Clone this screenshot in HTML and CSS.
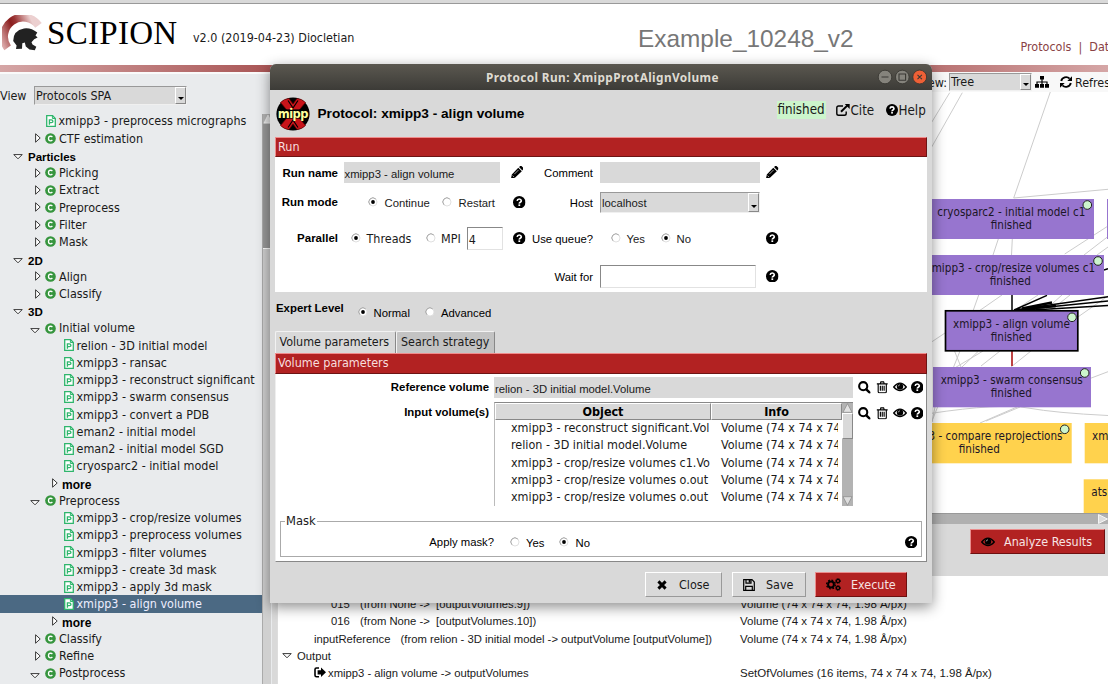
FILE: index.html
```html
<!DOCTYPE html>
<html lang="en">
<head>
<meta charset="utf-8">
<title>Scipion</title>
<link rel="stylesheet" href="styles.css">
</head>
<body>
<svg width="0" height="0" class="defs">
  <defs>
    <linearGradient id="crest" x1="0" y1="1" x2="1" y2="0.6">
      <stop offset="0" stop-color="#dba9a9"/><stop offset=".45" stop-color="#8a1d1d"/><stop offset=".6" stop-color="#9a3535"/><stop offset="1" stop-color="#ecd0d0"/>
    </linearGradient>
    <symbol id="help" viewBox="0 0 12 12"><circle cx="6" cy="6" r="6"/><path d="M4 4.6Q4.2 2.9 6 2.9T8 4.6Q8 5.4 7 6T6.1 7.3" fill="none" stroke="#fff" stroke-width="1.6"/><rect x="5.2" y="8" width="1.7" height="1.6" fill="#fff"/></symbol>
    <symbol id="pencil" viewBox="0 0 12 12"><path d="M0 12L.8 8.2 7 1.6 10.4 5 3.8 11.2ZM7.7 1L8.9 0Q9.7-.4 10.3.2L11.8 1.7Q12.3 2.2 11.8 3L10.9 4.2Z"/><path d="M1.5 9.2L2.8 10.5M3.2 7.8L7.2 3.8" stroke="#fff" stroke-width=".6"/></symbol>
    <symbol id="lens" viewBox="0 0 12 12"><circle cx="5" cy="5" r="3.9" fill="none" stroke="#000" stroke-width="2"/><path d="M8 8L11.2 11.2" stroke="#000" stroke-width="2.3" stroke-linecap="round"/></symbol>
    <symbol id="trash" viewBox="0 0 11 12"><path d="M.3 2.7H10.7M3.6 2.5L4.2.8H6.8L7.4 2.5M1.6 3V10.2Q1.6 11.3 2.7 11.3H8.3Q9.4 11.3 9.4 10.2V3M3.7 4.6V9.4M5.5 4.6V9.4M7.3 4.6V9.4" fill="none" stroke="#000" stroke-width="1.1"/></symbol>
    <symbol id="eye" viewBox="0 0 14 10"><path d="M.7 5Q7-2.6 13.3 5Q7 12.2.7 5Z" fill="none" stroke="#000" stroke-width="1.3"/><circle cx="7" cy="4.6" r="3.2"/><path d="M5.3 4.4Q5.4 2.9 6.9 2.8" stroke="#ddd" stroke-width=".7" fill="none"/></symbol>
    <symbol id="proto" viewBox="0 0 10 12"><path d="M.7.7H6.6L9.3 3.4V11.3H.7Z" fill="#fff" stroke="#2fb56c" stroke-width="1.3"/><path d="M6.4.7V3.5H9.3" fill="none" stroke="#2fb56c"/><path d="M3.4 9.8V4.9H5.2Q6.9 4.9 6.9 6.3T5.2 7.7H3.4" fill="none" stroke="#2fb56c" stroke-width="1.3"/></symbol>
    <symbol id="cat" viewBox="0 0 12 12"><circle cx="6" cy="6" r="5.8" fill="#36953e"/><path d="M8 4.5Q7.4 3.5 6.1 3.5Q3.8 3.6 3.8 6T6.1 8.5Q7.4 8.5 8 7.5" fill="none" stroke="#fff" stroke-width="1.4"/></symbol>
    <symbol id="closed" viewBox="0 0 6 10"><path d="M.6.8L5.2 5 .6 9.2Z" fill="#fff" stroke="#222" stroke-width=".9"/></symbol>
    <symbol id="open" viewBox="0 0 10 6"><path d="M.8.6H9.2L5 4.8Z" fill="#fff" stroke="#222" stroke-width=".9"/></symbol>
    <symbol id="radio" viewBox="0 0 10 10"><circle cx="5" cy="5" r="4" fill="#fff" stroke="#ddd" stroke-width=".9"/><path d="M2 7.8A4 4 0 0 1 7.8 2" fill="none" stroke="#999" stroke-width=".8"/></symbol>
    <symbol id="radio-on" viewBox="0 0 10 10"><use href="#radio"/><circle cx="5" cy="5" r="1.9"/></symbol>
  </defs>
</svg>

<div class="app">
  <div class="menubar"></div>
  <header class="header">
    <svg class="logo" width="40" height="40" viewBox="0 0 40 40">
      <path d="M5.6 32.8A17.6 17.6 0 0 1 36.5 10.4" fill="none" stroke="url(#crest)" stroke-width="8"/>
      <path d="M11.2 26Q11 15.5 22 13.4Q29 12.4 35.3 17.6L33.5 20.4 35.6 22.6 32.2 24.2 29.5 27.2 30.5 29.6 34.3 31.7 32.8 35.2 27.5 34.6 23.8 31.4 22.8 27.4 20.3 28.2 20 33.7 14 34 14.6 30.4Z" fill="#222"/>
    </svg>
    <span class="brand">SCIPION</span>
    <span class="version">v2.0 (2019-04-23) Diocletian</span>
    <span class="project">Example_10248_v2</span>
    <nav class="nav">Protocols&nbsp; |&nbsp; Data</nav>
  </header>
  <div class="stripe"></div>

  <main class="main">
    <aside class="side">
      <div class="viewrow"><span>View</span><div class="combo viewcombo"><span>Protocols SPA</span><i class="drop"></i></div></div>
      <div class="treewrap">
      <div class="tree">
        <div class="r p2"><svg class="ip"><use href="#proto"/></svg>xmipp3 - preprocess micrographs</div>
        <div class="r c"><svg class="ac"><use href="#closed"/></svg><svg class="ic"><use href="#cat"/></svg>CTF estimation</div>
        <div class="r g"><svg class="ao"><use href="#open"/></svg>Particles</div>
        <div class="r c"><svg class="ac"><use href="#closed"/></svg><svg class="ic"><use href="#cat"/></svg>Picking</div>
        <div class="r c"><svg class="ac"><use href="#closed"/></svg><svg class="ic"><use href="#cat"/></svg>Extract</div>
        <div class="r c"><svg class="ac"><use href="#closed"/></svg><svg class="ic"><use href="#cat"/></svg>Preprocess</div>
        <div class="r c"><svg class="ac"><use href="#closed"/></svg><svg class="ic"><use href="#cat"/></svg>Filter</div>
        <div class="r c"><svg class="ac"><use href="#closed"/></svg><svg class="ic"><use href="#cat"/></svg>Mask</div>
        <div class="r g"><svg class="ao"><use href="#open"/></svg>2D</div>
        <div class="r c"><svg class="ac"><use href="#closed"/></svg><svg class="ic"><use href="#cat"/></svg>Align</div>
        <div class="r c"><svg class="ac"><use href="#closed"/></svg><svg class="ic"><use href="#cat"/></svg>Classify</div>
        <div class="r g"><svg class="ao"><use href="#open"/></svg>3D</div>
        <div class="r o"><svg class="ao"><use href="#open"/></svg><svg class="ic"><use href="#cat"/></svg>Initial volume</div>
        <div class="r p3"><svg class="ip"><use href="#proto"/></svg>relion - 3D initial model</div>
        <div class="r p3"><svg class="ip"><use href="#proto"/></svg>xmipp3 - ransac</div>
        <div class="r p3"><svg class="ip"><use href="#proto"/></svg>xmipp3 - reconstruct significant</div>
        <div class="r p3"><svg class="ip"><use href="#proto"/></svg>xmipp3 - swarm consensus</div>
        <div class="r p3"><svg class="ip"><use href="#proto"/></svg>xmipp3 - convert a PDB</div>
        <div class="r p3"><svg class="ip"><use href="#proto"/></svg>eman2 - initial model</div>
        <div class="r p3"><svg class="ip"><use href="#proto"/></svg>eman2 - initial model SGD</div>
        <div class="r p3"><svg class="ip"><use href="#proto"/></svg>cryosparc2 - initial model</div>
        <div class="r m"><svg class="ac"><use href="#closed"/></svg>more</div>
        <div class="r o"><svg class="ao"><use href="#open"/></svg><svg class="ic"><use href="#cat"/></svg>Preprocess</div>
        <div class="r p3"><svg class="ip"><use href="#proto"/></svg>xmipp3 - crop/resize volumes</div>
        <div class="r p3"><svg class="ip"><use href="#proto"/></svg>xmipp3 - preprocess volumes</div>
        <div class="r p3"><svg class="ip"><use href="#proto"/></svg>xmipp3 - filter volumes</div>
        <div class="r p3"><svg class="ip"><use href="#proto"/></svg>xmipp3 - create 3d mask</div>
        <div class="r p3"><svg class="ip"><use href="#proto"/></svg>xmipp3 - apply 3d mask</div>
        <div class="r p3 sel"><svg class="ip"><use href="#proto"/></svg>xmipp3 - align volume</div>
        <div class="r m"><svg class="ac"><use href="#closed"/></svg>more</div>
        <div class="r c"><svg class="ac"><use href="#closed"/></svg><svg class="ic"><use href="#cat"/></svg>Classify</div>
        <div class="r c"><svg class="ac"><use href="#closed"/></svg><svg class="ic"><use href="#cat"/></svg>Refine</div>
        <div class="r o"><svg class="ao"><use href="#open"/></svg><svg class="ic"><use href="#cat"/></svg>Postprocess</div>
      </div>
      <div class="vscroll"><svg width="9" height="10" viewBox="0 0 9 10"><rect width="9" height="10" fill="#b3b3b3"/><path d="M5 1L9 9H1Z" fill="#e4e4e4" stroke="#fff" stroke-width=".6"/></svg><div class="thumb"></div></div>
      </div>
    </aside>

    <section class="work">
      <div class="toolbar">
        <span>View:</span>
        <div class="combo treecombo"><span>Tree</span><i class="drop"></i></div>
        <svg class="sitemap" width="14" height="12" viewBox="0 0 14 12"><path d="M5 0H9V3.4H7.6V5.4H12.6V8H14V11.8H10V8H11.4V6.5H7.6V8H9V11.8H5V8H6.4V6.5H2.6V8H4V11.8H0V8H1.4V5.4H6.4V3.4H5Z"/></svg>
        <svg class="refresh" width="12" height="12" viewBox="0 0 12 12"><path d="M1.2 5A5 5 0 0 1 9.6 2.6M10.8 7A5 5 0 0 1 2.4 9.4" fill="none" stroke="#000" stroke-width="1.9"/><path d="M12 .3V5H7.3ZM0 11.7V7H4.7Z"/></svg>
        <span>Refresh</span>
      </div>
      <svg class="graph" width="836" height="421" viewBox="272 92 836 421">
        <g class="edge">
          <path d="M949.7 92.7L930 125M962.3 92.7L930 150M1050.3 92L1013.7 198L1108 189.3M998.3 239L993 255M1012.3 239L1011.5 255M1108 226L1064.7 254M1108 236.5L1084 255M1108 247L1097 255M978.7 295L973 311M1002 295L979 311M1038 295L1014 311M1062 295L1044 311M1070 295L1050 311M948 331L930 343M960 351L930 426M978 351.5L962 367M954.5 351L961 367M983 351L953 369M1000 351L981 366M1031 351L1011 367M1090 378.5L1108 371.7M1075 319L1108 296"/>
          <path d="M930 413.5Q1000 403 1028 408T1108 415.5M980 423L1017 407M986 421L1020 407M932 422L935 407"/>
        </g>
        <g class="link">
          <path d="M1012 295V311M1014 310L1047 295.4M1014 310L1108 296.8M1014 310.5L1108 301M1014 311L1108 305.5M1104 270L1108 268.8"/>
          <path d="M1022 308.5L1052 302.5M1022 309L1056 306" stroke-width="2.4"/>
        </g>
        <path d="M1012 351V366" stroke="#b22222" stroke-width="1.7"/>
        <g fill="#9775cf">
          <rect x="928" y="199" width="166" height="40"/><rect x="1107" y="199" width="10" height="40"/>
          <rect x="917" y="255" width="187" height="40"/>
          <rect x="945.5" y="310.8" width="132.3" height="40" stroke="#000" stroke-width="1.7"/>
          <rect x="933" y="367" width="158" height="40.3"/>
        </g>
        <g fill="#ffd24d"><rect x="887" y="423" width="184.7" height="40.3"/><rect x="1084.7" y="423" width="40" height="40.3"/><rect x="1083.7" y="479.3" width="40" height="40"/></g>
        <g class="ntext">
          <text x="1011.3" y="215.9">cryosparc2 - initial model c1</text><text x="1011.3" y="228.9">finished</text>
          <text x="1010.3" y="272">xmipp3 - crop/resize volumes c1</text><text x="1010.3" y="284.9">finished</text>
          <text x="1011.5" y="328">xmipp3 - align volume</text><text x="1011.3" y="341">finished</text>
          <text x="1011.7" y="384">xmipp3 - swarm consensus</text><text x="1011.3" y="397">finished</text>
          <text x="979.3" y="440.3">xmipp3 - compare reprojections</text><text x="979.3" y="453.2">finished</text>
          <text class="ts" x="1092" y="440.3">xm</text><text class="ts" x="1091.3" y="496.3">ats</text>
        </g>
        <g fill="#ccf5cc" stroke="#222" stroke-width="1"><circle cx="1087.3" cy="205" r="4.3"/><circle cx="1098" cy="261" r="4.3"/><circle cx="1072" cy="317.3" r="4.3"/><circle cx="1084.7" cy="373" r="4.3"/><circle cx="1064.7" cy="429.3" r="4.3"/></g>
      </svg>
      <div class="hscroll"><svg width="10" height="10" viewBox="0 0 10 10"><path d="M.5.5V9.5L9.5 5Z" fill="#ddd" stroke="#fff" stroke-width=".8"/></svg></div>
      <div class="actions"><button class="btn red analyze"><svg width="14" height="10"><use href="#eye"/></svg>Analyze Results</button></div>
      <div class="summary">
        <div class="s"><span class="s1">015</span><span class="s2">(from None -&gt;</span><span class="s3">[outputVolumes.9])</span><span class="info">Volume (74 x 74 x 74, 1.98 Å/px)</span></div>
        <div class="s"><span class="s1">016</span><span class="s2">(from None -&gt;</span><span class="s3">[outputVolumes.10])</span><span class="info">Volume (74 x 74 x 74, 1.98 Å/px)</span></div>
        <div class="s"><span class="s4">inputReference</span><span>(from relion - 3D initial model -&gt; outputVolume [outputVolume])</span><span class="info">Volume (74 x 74 x 74, 1.98 Å/px)</span></div>
        <div class="s out"><svg class="ao"><use href="#open"/></svg>Output</div>
        <div class="s res"><svg width="12" height="11" viewBox="0 0 12 11"><path d="M5 1H2.5Q1 1 1 2.5V8.3Q1 9.8 2.5 9.8H5" fill="none" stroke="#000" stroke-width="1.6"/><path d="M3.6 3.2H7V.6L12 5.3 7 10V7.4H3.6Z"/></svg>xmipp3 - align volume -&gt; outputVolumes<span class="info">SetOfVolumes (16 items, 74 x 74 x 74, 1.98 Å/px)</span></div>
      </div>
    </section>
  </main>
</div>

<div class="dialog">
  <div class="title"><span>Protocol Run: XmippProtAlignVolume</span>
    <svg width="52" height="16" viewBox="0 0 52 16"><g stroke="#35342f" stroke-width=".8"><circle cx="8" cy="8" r="6.8" fill="#85837c"/><circle cx="25.3" cy="8" r="6.8" fill="#85837c"/><circle cx="42.7" cy="8" r="6.9" fill="#ee6036"/></g><path d="M4.5 8H11.5M22 5H28.6V11.2H22ZM40.5 5.8L44.9 10.2M44.9 5.8L40.5 10.2" fill="none" stroke="#3a3934" stroke-width="1.1"/></svg>
  </div>
  <div class="dhead">
    <svg width="34" height="34" viewBox="0 0 34 34"><circle cx="17" cy="17" r="16.6"/><g fill="#c8141a" stroke="#5d0000" stroke-width=".7"><path d="M4.5 5.5Q8 1.8 13 1.4L17 7 21 1.4Q26 1.8 29.5 5.5L21.5 15H12.5Z"/><path d="M4.5 28.5Q8 32.2 13 32.6L17 27 21 32.6Q26 32.2 29.5 28.5L21.5 19H12.5Z"/></g><rect x="1" y="12.4" width="32" height="9.2" fill="#000"/><path d="M12 3.5L17 11 22 3.5M12 30.5L17 23 22 30.5" fill="none" stroke="#000" stroke-width="1.2"/><text x="16.8" y="20.6" class="mipp">mipp</text></svg>
    <h1>Protocol: xmipp3 - align volume</h1>
    <span class="status">finished</span>
    <span class="hl cite"><svg width="14" height="12" viewBox="0 0 14 12"><path d="M7 2H2.6Q.8 2 .8 3.8V9.4Q.8 11.2 2.6 11.2H8.4Q10.2 11.2 10.2 9.4V7.4" fill="none" stroke="#000" stroke-width="1.4"/><path d="M5 7.8L11.5 1.4" stroke="#000" stroke-width="2"/><path d="M8.8 0H13.7V5Z"/></svg>Cite</span>
    <span class="hl"><svg width="12" height="12"><use href="#help"/></svg>Help</span>
  </div>
  <div class="band">Run</div>
  <div class="run">
    <div class="f f1"><b>Run name</b><div class="in gray">xmipp3 - align volume</div><svg class="i pen"><use href="#pencil"/></svg><label>Comment</label><div class="in gray"></div><svg class="i"><use href="#pencil"/></svg></div>
    <div class="f f2"><b>Run mode</b><div class="opts"><svg><use href="#radio-on"/></svg><span class="w65">Continue</span><svg><use href="#radio"/></svg><span>Restart</span></div><svg class="i"><use href="#help"/></svg><label>Host</label><div class="combo host"><span>localhost</span><i class="drop"></i></div></div>
    <div class="f f3"><b>Parallel</b><div class="opts par"><svg><use href="#radio-on"/></svg><span class="w64">Threads</span><svg><use href="#radio"/></svg><span>MPI</span><div class="in num">4</div></div><svg class="i"><use href="#help"/></svg><label>Use queue?</label><div class="opts q"><svg><use href="#radio"/></svg><span class="w39">Yes</span><svg><use href="#radio-on"/></svg><span>No</span></div><svg class="i"><use href="#help"/></svg></div>
    <div class="f f4"><label class="wait">Wait for</label><div class="in wfor"></div><svg class="i"><use href="#help"/></svg></div>
  </div>
  <div class="expert"><b>Expert Level</b><div class="opts"><svg><use href="#radio-on"/></svg><span class="w56">Normal</span><svg><use href="#radio"/></svg><span>Advanced</span></div></div>
  <div class="tabs"><div class="tab on">Volume parameters</div><div class="tab">Search strategy</div></div>
  <div class="band vol">Volume parameters</div>
  <div class="panel">
    <div class="v v1"><b>Reference volume</b><div class="in gray">relion - 3D initial model.Volume</div><div class="icons"><svg><use href="#lens"/></svg><svg><use href="#trash"/></svg><svg class="eye"><use href="#eye"/></svg><svg><use href="#help"/></svg></div></div>
    <div class="v v2"><b>Input volume(s)</b>
      <div class="list">
        <div class="cells">
          <div class="th">Object</div><div class="th">Info</div>
          <div>xmipp3 - reconstruct significant.Vol</div><div>Volume (74 x 74 x 74</div>
          <div>relion - 3D initial model.Volume</div><div>Volume (74 x 74 x 74</div>
          <div>xmipp3 - crop/resize volumes c1.Vo</div><div>Volume (74 x 74 x 74</div>
          <div>xmipp3 - crop/resize volumes o.out</div><div>Volume (74 x 74 x 74</div>
          <div>xmipp3 - crop/resize volumes o.out</div><div>Volume (74 x 74 x 74</div>
        </div>
        <div class="lscroll"><svg width="11" height="10" viewBox="0 0 11 10"><path d="M5.5.7L10 9.3H1Z" fill="#e2e2e2" stroke="#888" stroke-width=".7"/></svg><div class="lthumb"></div><svg width="11" height="10" viewBox="0 0 11 10"><path d="M5.5 9.3L10 .7H1Z" fill="#ddd" stroke="#888" stroke-width=".7"/></svg></div>
      </div>
      <div class="icons"><svg><use href="#lens"/></svg><svg><use href="#trash"/></svg><svg class="eye"><use href="#eye"/></svg><svg><use href="#help"/></svg></div></div>
    <fieldset class="mask"><legend>Mask</legend><div class="mrow"><label>Apply mask?</label><div class="opts"><svg><use href="#radio"/></svg><span class="w38">Yes</span><svg><use href="#radio-on"/></svg><span>No</span></div><svg class="mh"><use href="#help"/></svg></div></fieldset>
  </div>
  <div class="foot">
    <button class="btn close"><svg width="10" height="10" viewBox="0 0 10 10"><path d="M1.4 1.4L8.6 8.6M8.6 1.4L1.4 8.6" stroke="#000" stroke-width="2.9"/></svg>Close</button>
    <button class="btn save"><svg width="12" height="12" viewBox="0 0 12 12"><path d="M.7.7H9L11.3 3V11.3H.7ZM3 .7V4.2H8V.7M2.7 11V7.3H9.3V11" fill="none" stroke="#000" stroke-width="1.2"/><rect x="5.7" y="1" width="1.7" height="2.6"/></svg>Save</button>
    <button class="btn red exec"><svg width="15" height="13" viewBox="0 0 15 13"><g fill="none" stroke="#000"><circle cx="5" cy="6.5" r="2.9" stroke-width="2"/><circle cx="5" cy="6.5" r="4.4" stroke-width="1.3" stroke-dasharray="1.8 1.65"/><circle cx="12" cy="3" r="1.6" stroke-width="1.3"/><circle cx="12" cy="3" r="2.5" stroke-width=".9" stroke-dasharray="1.1 .9"/><circle cx="12" cy="10" r="1.6" stroke-width="1.3"/><circle cx="12" cy="10" r="2.5" stroke-width=".9" stroke-dasharray="1.1 .9"/></g></svg>Execute</button>
  </div>
</div>
</body>
</html>
```
FILE: styles.css
```css
* { box-sizing: border-box; }
html, body { margin: 0; height: 684px; overflow: hidden; }
body { position: relative; font: 12.45px "DejaVu Sans Condensed", "DejaVu Sans", sans-serif; color: #1a1a1a; background: #d9d9d9; white-space: nowrap; }
svg { display: block; flex: none; }
.defs { position: absolute; }
.app { width: 1108px; height: 684px; display: flex; flex-direction: column; overflow: hidden; }
.menubar { height: 4px; flex: none; background: #d9d9d9; border-bottom: 1px solid #999; }
.header { height: 61px; flex: none; background: #fff; display: flex; align-items: center; padding-left: 2px; }
.logo { margin-top: 1px; }
.brand { font: 33px/40px "Liberation Serif", serif; color: #000; margin-left: 5px; width: 146px; padding-bottom: 3px; letter-spacing: .3px; }
.version { width: 445px; padding-top: 6px; }
.project { font: 24.4px/30px "Liberation Sans", sans-serif; color: #777; width: 383px; padding-top: 10px; height: 42px; }
.nav { color: #8a4245; padding-top: 23px; margin-left: -.5px; }
.header > span, .header > nav { flex: none; }
.stripe { height: 7px; flex: none; background: linear-gradient(90deg, #d5a6a6, #7a0000 50%, #d5a6a6); }
.main { flex: 1; display: flex; min-height: 0; }

.combo { display: flex; justify-content: space-between; background: #d9d9d9; border: 1px solid #f0f0f0; border-top-color: #999; border-left-color: #999; padding-left: 1px; }
.drop { width: 11px; border: 1px solid #888; border-top-color: #fff; border-left-color: #fff; display: flex; align-items: flex-end; justify-content: center; padding-bottom: 3px; }
.drop::after { content: ""; border: 3px solid transparent; border-top-color: #000; border-bottom: 0; }
.side { width: 272px; flex: none; background: #e9ebed; border-top: 2px solid #fafafa; display: flex; flex-direction: column; }
.viewrow { display: flex; height: 40px; align-items: center; padding-top: 3px; }
.viewrow > span { width: 34px; }
.viewcombo { width: 153px; height: 19px; line-height: 17px; }
.treewrap { flex: 1; display: flex; min-height: 0; }
.tree { width: 262px; margin-top: -1.6px; }
.r { height: 17.25px; line-height: 17.25px; display: flex; align-items: center; }
.ip { width: 10px; height: 12px; margin-right: 2.5px; }
.ic { width: 11px; height: 11px; margin-right: 3px; }
.ac { width: 6px; height: 10px; }
.ao { width: 10px; height: 6px; }
.p2 { padding-left: 46px; }
.p3 { padding-left: 64px; }
.c { padding-left: 35px; }
.c .ac { margin-right: 4px; }
.o { padding-left: 30px; }
.o .ao { margin: 5px 5px 0 0; }
.g, .m { font: bold 11.5px/20px "Liberation Sans", sans-serif; color: #000; padding-top: 3px; }
.g { padding-left: 13px; }
.g .ao { margin-right: 5px; }
.m { padding-left: 52px; font-size: 12px; }
.m .ac { margin: -3px 4px 0 0; }
.sel { background: #4b6983; color: #eef; }
.vscroll { width: 9px; background: #999; border-left: 1px solid #aaa; display: flex; flex-direction: column; }
.thumb { margin-top: 124px; flex: 1; background: #d0d0d0; border-top: 1px solid #fff; }

.work { flex: 1; display: flex; flex-direction: column; background: #fff; min-width: 0; }
.toolbar { height: 20px; flex: none; display: flex; align-items: center; padding-left: 643px; background: #f8f8f8; }
.toolbar > * { flex: none; }
.toolbar > span:first-child { width: 34px; text-align: right; padding-right: 2px; }
.treecombo { width: 83px; height: 18px; line-height: 16px; }
.sitemap { margin-left: 3px; }
.refresh { margin: 0 3px 0 11px; }
.graph { background: #fff; flex: none; }
.edge { fill: none; stroke: #ccc; stroke-width: 1; }
.link { fill: none; stroke: #000; stroke-width: 1.5; }
.ntext { font-size: 11.6px; text-anchor: middle; fill: #1b1626; }
.ts { text-anchor: start; }
.hscroll { height: 11px; flex: none; background: #b0b0b0; border-top: 1px solid #999; display: flex; justify-content: flex-end; }
.actions { height: 52px; flex: none; background: #d9d9d9; display: flex; justify-content: flex-end; padding: 5px 3px 0 0; }
.btn { font: 12.45px "DejaVu Sans Condensed", "DejaVu Sans", sans-serif; color: #1a1a1a; height: 25px; padding: 0; margin: 0; border: 1px solid #999; border-top-color: #fff; border-left-color: #fff; border-radius: 0; background: #d9d9d9; display: flex; align-items: center; white-space: nowrap; }
.red { background: #b22222; color: #f7e4e4; border-color: #6d1010; border-top-color: #ea8d8d; border-left-color: #ea8d8d; }
.analyze { width: 135px; padding-left: 10px; gap: 9px; }
.summary { flex: 1; background: #fff; border-left: 5px solid #d9d9d9; font: 11.28px "Liberation Sans", sans-serif; padding-top: 20px; box-shadow: inset 1px 0 #ddd; position: relative; }
.s { height: 17.25px; line-height: 17.25px; display: flex; align-items: center; }
.s1 { padding-left: 54px; width: 83px; }
.s2 { width: 76px; }
.s4 { padding-left: 37px; width: 123.5px; }
.info { position: absolute; left: 463px; font-size: 11.5px; }
.out { padding-left: 5px; }
.out .ao { margin-right: 5px; }
.res { padding-left: 37px; }
.res > svg { margin-right: 2px; margin-top: -2px; }

.dialog { position: absolute; left: 270px; top: 64px; width: 662px; height: 539px; background: #d9d9d9; border-radius: 6px 6px 0 0; box-shadow: 0 4px 14px rgba(0,0,0,.45); padding: 0 5px; font-family: "Liberation Sans", sans-serif; font-size: 11.3px; }
.title { height: 26px; margin: 0 -5px; background: linear-gradient(#5b5850, #3c3b37); border-radius: 6px 6px 0 0; display: flex; align-items: center; padding-left: 216px; color: #dfdbd2; font: bold 11.8px "Noto Sans", sans-serif; }
.title span { width: 391px; letter-spacing: .4px; }
.dhead { height: 47px; display: flex; align-items: center; font: 13.3px "DejaVu Sans Condensed", "DejaVu Sans", sans-serif; }
.dhead > svg { margin-left: 1px; }
.dhead h1 { font: bold 13.65px "Liberation Sans", sans-serif; color: #000; margin: 0 0 0 7.5px; width: 459px; flex: none; }
.mipp { font: bold 11.5px "DejaVu Sans", sans-serif; fill: #ffff9c; text-anchor: middle; letter-spacing: -.6px; }
.status { background: #ccf5cc; height: 18px; line-height: 17px; width: 49px; text-align: center; margin-top: -7px; }
.hl { display: flex; align-items: center; gap: 1px; margin-top: -7px; }
.cite { margin-left: 10px; width: 50px; }
.band { height: 20px; line-height: 17px; background: #b22222; color: #f7dede; border: 1.5px solid #6d1414; border-top-color: #f08c8c; border-left-color: #f08c8c; font-family: "DejaVu Sans Condensed", "DejaVu Sans", sans-serif; font-size: 12.5px; padding-left: 2px; }
.run { background: #fff; height: 135px; padding-top: 5px; }
.f { display: grid; grid-template-columns: 63px 157px 37px 62px 160px 1fr; align-items: center; }
.f > b, .f > label { text-align: right; color: #000; }
.f > label { padding-right: 1px; }
.f > b { font-size: 11.5px; }
.in { background: #fff; border: 1px solid #e2e2e2; border-top-color: #888; border-left-color: #888; height: 21px; line-height: 22px; padding-left: 1px; }
.in.gray { background: #d9d9d9; border-color: #d9d9d9; padding-left: 0; }
.f > .in, .f > .combo { margin-left: 6px; width: 156px; }
.f1 > .in { margin-left: 5.5px; }
.f1 > .in + svg + label + .in, .f > .host { width: 160px; }
.f1 { height: 21px; }
.f1 > label, .f2 > label { padding-top: 1px; }
.i { width: 12.5px; height: 12.5px; justify-self: end; margin: -1px 6.5px 0 0; }
.f > .i:last-child { justify-self: start; margin: -1px 0 0 12px; }
.f1 .pen { margin-right: 9px; }
.f2 { height: 21px; margin-top: 9px; }
.f2 > b { margin-top: -1px; }
.combo.host { height: 21px; line-height: 20px; padding-left: 1px; }
.opts { display: flex; align-items: center; }
.opts > svg { width: 10px; height: 10px; margin-right: 7px; }
.opts > span { padding-top: 1.5px; }
.f2 .opts { padding-left: 30px; margin-top: -1px; }
.f2 .opts svg { margin-right: 6.5px; }
.w65 { width: 59.5px; }
.f3 { height: 23px; margin-top: 14px; }
.f3 > b { margin-top: -1px; }
.par { font: 12.45px "DejaVu Sans Condensed", "DejaVu Sans", sans-serif; padding-left: 13px; }
.par > svg { margin-right: 5.5px; margin-top: -1px; }
.par > span { padding: 0; }
.w64 { width: 59px; flex: none; }
.in.num { width: 36px; height: 23px; margin-left: 6px; flex: none; line-height: 23px; }
.q { padding-left: 16.5px; margin-top: -1px; }
.q > svg { margin-right: 6px; }
.w39 { width: 34px; }
.f4 { height: 23px; margin-top: 15px; }
.f .wait { grid-column: 4; }
.in.wfor { height: 23px; }
.expert { height: 39px; display: flex; align-items: center; padding: 0 0 8px 1px; color: #000; }
.expert b { width: 81.5px; font-size: 11.4px; }
.expert .opts { padding-top: 9px; }
.expert .opts > svg { margin-right: 6px; }
.w56 { width: 51.5px; }
.tabs { display: flex; height: 22px; font: 12.4px "DejaVu Sans Condensed", "DejaVu Sans", sans-serif; }
.tab { height: 22px; line-height: 19px; padding: 0 4px; border: 1px solid #888; border-top-color: #f2f2f2; border-left-color: #f2f2f2; border-bottom: 0; border-radius: 2px 2px 0 0; background: #c3c3c3; width: 99px; }
.tab.on { background: #d9d9d9; width: 121px; padding-left: 3.5px; }
.band.vol { height: 21px; line-height: 18px; }
.panel { background: #fff; height: 188px; border: 1px solid #888; border-top: 0; border-left-color: #eee; padding-top: 3px; }
.v { display: grid; grid-template-columns: 213px 359px 1fr; column-gap: 5px; color: #000; }
.v > b { text-align: right; font-size: 11.4px; padding-top: 4px; }
.v1 { height: 25px; }
.v1 .in { color: #1a1a1a; }
.v2 { height: 104px; }
.icons { display: flex; gap: 5.3px; padding-top: 4px; height: 17px; }
.v2 .icons { padding-top: 5px; height: 18px; }
.icons svg { width: 12.5px; height: 12.5px; }
.icons .eye { width: 14px; height: 10px; margin: 1px -1px; }
.list { display: flex; border-top: 1px solid #888; border-left: 1px solid #bbb; font: 12.45px "DejaVu Sans Condensed", "DejaVu Sans", sans-serif; height: 104px; color: #1a1a1a; }
.cells { display: grid; grid-template-columns: 216px 131px; grid-template-rows: 17px repeat(5, 17.25px); width: 347px; }
.cells > div { overflow: hidden; line-height: 16px; padding-left: 16px; }
.cells > div:nth-child(even) { padding-left: 10px; width: 127px; }
.cells > .th, .cells > .th:nth-child(even) { width: auto; font-weight: bold; text-align: center; padding: 0; background: #d9d9d9; border: 1px solid #888; border-top-color: #fff; border-left-color: #fff; line-height: 15px; color: #000; }
.lscroll { width: 11px; background: #b3b3b3; display: flex; flex-direction: column; }
.lthumb { height: 26px; margin-bottom: auto; background: #d9d9d9; border: 1px solid #888; border-top-color: #fff; border-left-color: #fff; }
.mask { border: 1px solid #aaa; margin: 8px 4px 0 4px; padding: 0; height: 43px; min-width: 0; }
.mask legend { font: 12.8px/14px "DejaVu Sans Condensed", "DejaVu Sans", sans-serif; padding: 0 1px; margin-left: 4px; }
.mrow { display: flex; align-items: center; padding-top: 7px; height: 21px; color: #000; }
.mrow > label { width: 213px; text-align: right; margin-right: 15.5px; }
.mrow .opts > svg { margin-right: 6.5px; }
.w38 { width: 33px; }
.mh { width: 12.5px; height: 12.5px; margin: 0 4px 0 auto; }
.foot { display: flex; padding: 10px 20px 0 0; justify-content: flex-end; }
.foot .close { width: 77px; padding-left: 11px; gap: 12px; margin-right: 10px; }
.foot .save { width: 74px; padding-left: 10px; gap: 11px; margin-right: 9px; }
.foot .exec { width: 92px; padding-left: 10px; gap: 10px; }
```
